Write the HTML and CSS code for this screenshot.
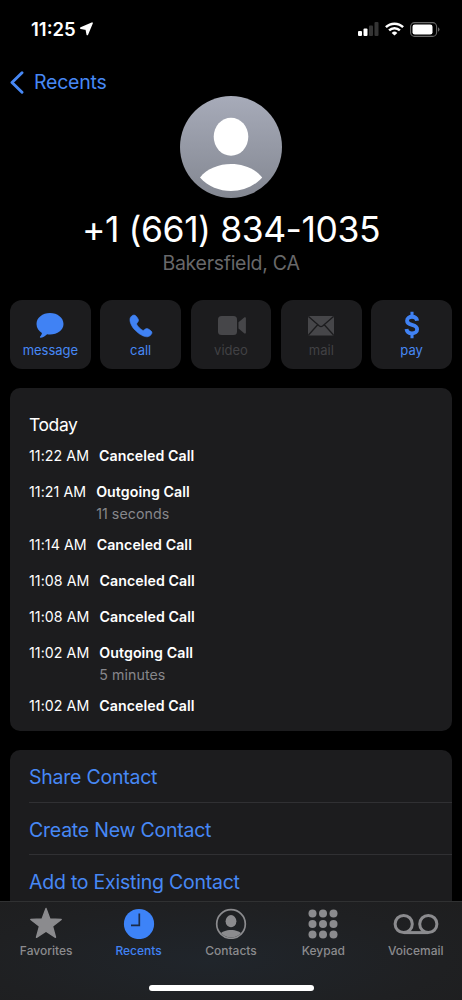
FILE: index.html
```html
<!DOCTYPE html>
<html lang="en">
<head>
<meta charset="utf-8">
<title>Recents</title>
<link rel="stylesheet" href="styles.css">
</head>
<body>
<div class="phone">
  <header class="status">
    <div class="clock"><span>11:25</span>
      <svg class="loc" width="13" height="14" viewBox="0 0 13 14"><path d="M12 1.200 7.300 12.400 6.300 7.100.9 6.100Z" fill="#fff" stroke="#fff" stroke-width="1.700" stroke-linejoin="round"/></svg>
    </div>
    <div class="signals">
      <svg width="21" height="14" viewBox="0 0 21 14"><rect x="0" y="9" width="4" height="5" rx="1" fill="#fff"/><rect x="5.500" y="6.500" width="4" height="7.500" rx="1" fill="#fff"/><rect x="11" y="3.500" width="4" height="10.500" rx="1" fill="#343434"/><rect x="16.500" y="0" width="4" height="14" rx="1" fill="#343434"/></svg>
      <svg width="19" height="14" viewBox="0 0 19 14" fill="none" stroke="#fff" stroke-width="2.500"><path d="M.9 5.100a12.400 12.400 0 0 1 17.200 0"/><path d="M4.100 8.400a7.800 7.800 0 0 1 10.800 0"/><path d="M9.500 13.600 6.700 10.900a4.100 4.100 0 0 1 5.600 0Z" fill="#fff" stroke="none"/></svg>
      <svg width="30" height="15" viewBox="0 0 30 15"><rect x=".6" y=".6" width="26" height="13.800" rx="4" fill="none" stroke="#686868" stroke-width="1.100"/><rect x="2.500" y="2.400" width="20" height="10.200" rx="2.300" fill="#fff"/><path d="M28 5.200q1.500.7 1.500 2.300T28 9.800Z" fill="#686868"/></svg>
    </div>
  </header>
  <nav class="back">
    <svg width="14" height="23" viewBox="0 0 14 23" fill="none" stroke="#4788f5" stroke-width="2.900" stroke-linecap="round" stroke-linejoin="round"><path d="M12 1.700 2 11.500 12 21.300"/></svg>
    <span>Recents</span>
  </nav>
  <section class="contact">
    <svg class="avatar" width="102" height="102" viewBox="0 0 102 102"><defs><linearGradient id="g" x1="0" y1="0" x2="0" y2="1"><stop offset="0" stop-color="#a7abb9"/><stop offset="1" stop-color="#838791"/></linearGradient></defs><circle cx="51" cy="51" r="51" fill="url(#g)"/><ellipse cx="51" cy="40.700" rx="17.300" ry="19" fill="#fff"/><path d="M20 81.500C34 63.500 68 63.500 82.200 81.500C66 99.500 36 99.500 20 81.500Z" fill="#fff"/></svg>
    <h1>+1 (661) 834-1035</h1>
    <p>Bakersfield, CA</p>
  </section>
  <div class="actions">
    <button class="action"><svg width="28" height="28" viewBox="0 0 28 28"><path d="M14 2C21.500 2 27.500 6.700 27.500 13S21.500 23.500 14 23.500c-1.100 0-2-.1-2.900-.3C9.300 25 6.500 26.700 4.500 26.700c-.8 0-.8-.6-.4-1.100 1-1.200 1.800-2.300 1.800-3.600C2.700 20 .5 16.800.5 13 .5 6.700 6.500 2 14 2Z"/></svg><span>message</span></button>
    <button class="action"><svg width="28" height="28" viewBox="0 0 28 28"><path d="M3.600 6.200C5 4.500 6.500 3.500 8 4.300c1.300.7 3.200 3.300 3.500 4.700.3 1.600-1.500 2.600-1.800 3.700-.3 1.500 5.200 6.900 6.600 6.700 1.200-.2 2.200-2.200 3.900-1.800 1.400.3 4.300 2.200 4.700 3.500.5 1.700-1.700 4.200-4 4.600-3.500.6-8.800-2.400-12.700-6.400C4 15.100 1.700 9 3.600 6.200Z" stroke="#4082f4" stroke-width=".6"/></svg><span>call</span></button>
    <button class="action off"><svg width="30" height="28" viewBox="0 0 30 28"><rect x="2" y="5" width="19" height="19" rx="3.500"/><path d="M22.500 11.300 28.200 6.500c.8-.7 1.700-.3 1.700.8v14.200c0 1.100-.9 1.500-1.700.8l-5.700-4.800Z"/></svg><span>video</span></button>
    <button class="action off"><svg width="28" height="28" viewBox="0 0 28 28"><rect x="1" y="5" width="26" height="19.500" rx="1.500"/><path d="M1.500 5.500 12.400 15q1.600 1.300 3.200 0L26.500 5.500M1.500 24 10.500 14M26.500 24l-9-10" fill="none" stroke="#1c1c1e" stroke-width="1.300"/></svg><span>mail</span></button>
    <button class="action"><svg width="28" height="29" viewBox="0 0 28 29" fill="none" stroke="#4082f4"><path d="M14 .7v5M14 23v5.300" stroke-width="3.200"/><path d="M19.300 10.100C18.800 7.400 16.700 6 14 6S8.900 7.500 8.900 10c0 2.700 2.300 3.600 5.100 4.300 3.100.8 5.300 1.700 5.300 4.600 0 2.800-2.300 4.300-5.300 4.300-3.200 0-5.300-1.600-5.700-4.500" stroke-width="4"/></svg><span>pay</span></button>
  </div>
  <section class="card history">
    <h2>Today</h2>
    <div class="entry"><time>11:22 AM</time><div><b>Canceled Call</b></div></div>
    <div class="entry"><time>11:21 AM</time><div><b>Outgoing Call</b><small>11 seconds</small></div></div>
    <div class="entry"><time>11:14 AM</time><div><b>Canceled Call</b></div></div>
    <div class="entry"><time>11:08 AM</time><div><b>Canceled Call</b></div></div>
    <div class="entry"><time>11:08 AM</time><div><b>Canceled Call</b></div></div>
    <div class="entry"><time>11:02 AM</time><div><b>Outgoing Call</b><small>5 minutes</small></div></div>
    <div class="entry"><time>11:02 AM</time><div><b>Canceled Call</b></div></div>
  </section>
  <section class="card links">
    <a>Share Contact</a>
    <a>Create New Contact</a>
    <a>Add to Existing Contact</a>
  </section>
  <footer class="tabbar">
    <div class="tabs">
      <div class="tab"><svg width="34" height="32" viewBox="0 0 34 32"><path d="M17 1.500 20.900 12 32.200 12.400 23.500 19.300 26.500 30.300 17 24.200 7.500 30.300 10.500 19.300 1.800 12.400 13.100 12Z" stroke="#8b8b8e" stroke-width="1.400" stroke-linejoin="round"/></svg><span>Favorites</span></div>
      <div class="tab on"><svg width="32" height="32" viewBox="0 0 32 32"><circle cx="16" cy="17" r="15.100"/><path d="M16.300 6.500v11.800H8" fill="none" stroke="#1b2b48" stroke-width="1.700"/></svg><span>Recents</span></div>
      <div class="tab"><svg width="32" height="32" viewBox="0 0 32 32"><defs><clipPath id="c"><circle cx="16" cy="17" r="13.500"/></clipPath></defs><circle cx="16" cy="17" r="14.300" fill="none" stroke="#8b8b8e" stroke-width="1.700"/><g clip-path="url(#c)"><ellipse cx="16" cy="14.200" rx="5.400" ry="6.100"/><path d="M5 27.500C8 21.500 24 21.500 27 27.500L24 33H8Z"/></g></svg><span>Contacts</span></div>
      <div class="tab"><svg width="32" height="32" viewBox="0 0 32 32"><circle cx="5.500" cy="6.500" r="4"/><circle cx="16" cy="6.500" r="4"/><circle cx="26.500" cy="6.500" r="4"/><circle cx="5.500" cy="17" r="4"/><circle cx="16" cy="17" r="4"/><circle cx="26.500" cy="17" r="4"/><circle cx="5.500" cy="27.500" r="4"/><circle cx="16" cy="27.500" r="4"/><circle cx="26.500" cy="27.500" r="4"/></svg><span>Keypad</span></div>
      <div class="tab"><svg width="46" height="32" viewBox="0 0 46 32" fill="none" stroke="#8b8b8e" stroke-width="3"><circle cx="10.700" cy="17" r="8.600"/><circle cx="35.300" cy="17" r="8.600"/><path d="M10.700 25.600h24.600"/></svg><span>Voicemail</span></div>
    </div>
    <div class="home"></div>
  </footer>
</div>
</body>
</html>
```
FILE: styles.css
```css
* { box-sizing: border-box; }
body { margin: 0; background: #000; font-family: Inter, "Liberation Sans", sans-serif; color: #fff; }
.phone { position: relative; width: 462px; height: 1000px; overflow: hidden; background: #000; }
svg { display: block; flex: none; }
.status { height: 60px; padding: 0 22px 2px 31px; display: flex; justify-content: space-between; align-items: center; }
.clock { display: flex; align-items: center; gap: 4px; font-size: 18.5px; font-weight: 600; letter-spacing: 0; }
.signals { display: flex; align-items: center; gap: 6px; }
.back { height: 36px; padding: 8px 0 0 10px; display: flex; align-items: center; gap: 10px; font-size: 19.5px; letter-spacing: -.22px; color: #4788f5; }
.contact { display: flex; flex-direction: column; align-items: center; }
.contact h1 { margin: 9px 0 0; font-size: 35.5px; line-height: 46px; font-weight: 400; letter-spacing: -.45px; white-space: nowrap; }
.contact p { margin: -1px 0 0; font-size: 19.5px; line-height: 22px; letter-spacing: -.28px; color: #68686a; }
.actions { padding: 26px 10px 0; height: 95px; display: flex; gap: 9.5px; }
.action { flex: 1 1 0; min-width: 0; height: 69px; margin: 0; border: 0; border-radius: 12px; background: #1c1c1e; padding: 11px 0 0; display: flex; flex-direction: column; align-items: center; font: 400 13px/16px Inter, sans-serif; letter-spacing: 0; color: #4788f5; fill: #4082f4; }
.action svg { height: 28px; }
.action span { margin-top: 3px; }
.action.off { color: #414144; fill: #464649; }
.card { margin: 19px 10px 0 10px; border-radius: 10px; background: #1c1c1e; }
.history { height: 343px; padding: 26px 19px 0; }
.history h2 { margin: 0 0 8px; font-size: 17.5px; font-weight: 400; line-height: 22px; letter-spacing: -.4px; }
.entry { display: flex; gap: 10px; font-size: 14.2px; line-height: 24px; letter-spacing: .06px; padding-bottom: 12px; white-space: nowrap; }
.entry b { display: block; font-weight: 600; }
.entry small { display: block; font-size: 14.2px; line-height: 20px; margin-bottom: -3px; color: #87878b; }
.links { padding-left: 19px; height: 200px; }
.links a { display: block; height: 52.5px; line-height: 54px; font-size: 19.5px; letter-spacing: -.23px; color: #4788f5; border-bottom: 1px solid #303033; }
.tabbar { position: absolute; left: 0; bottom: 0; width: 100%; height: 99px; border-top: 1px solid #303132; background: radial-gradient(ellipse at 46% 60%, #20252b 0%, #1f2022 65%, #1e1e1f 100%); }
.tabs { display: grid; grid-template-columns: repeat(5, 1fr); padding-top: 5px; }
.tab { display: flex; flex-direction: column; align-items: center; gap: 4px; font-size: 12px; line-height: 16px; font-weight: 500; letter-spacing: 0; color: #8b8b8e; fill: #8b8b8e; }
.tab.on { color: #4082f4; fill: #3d83f8; }
.home { width: 165px; height: 6px; border-radius: 3px; background: #fff; margin: 26px auto 0; }
```
